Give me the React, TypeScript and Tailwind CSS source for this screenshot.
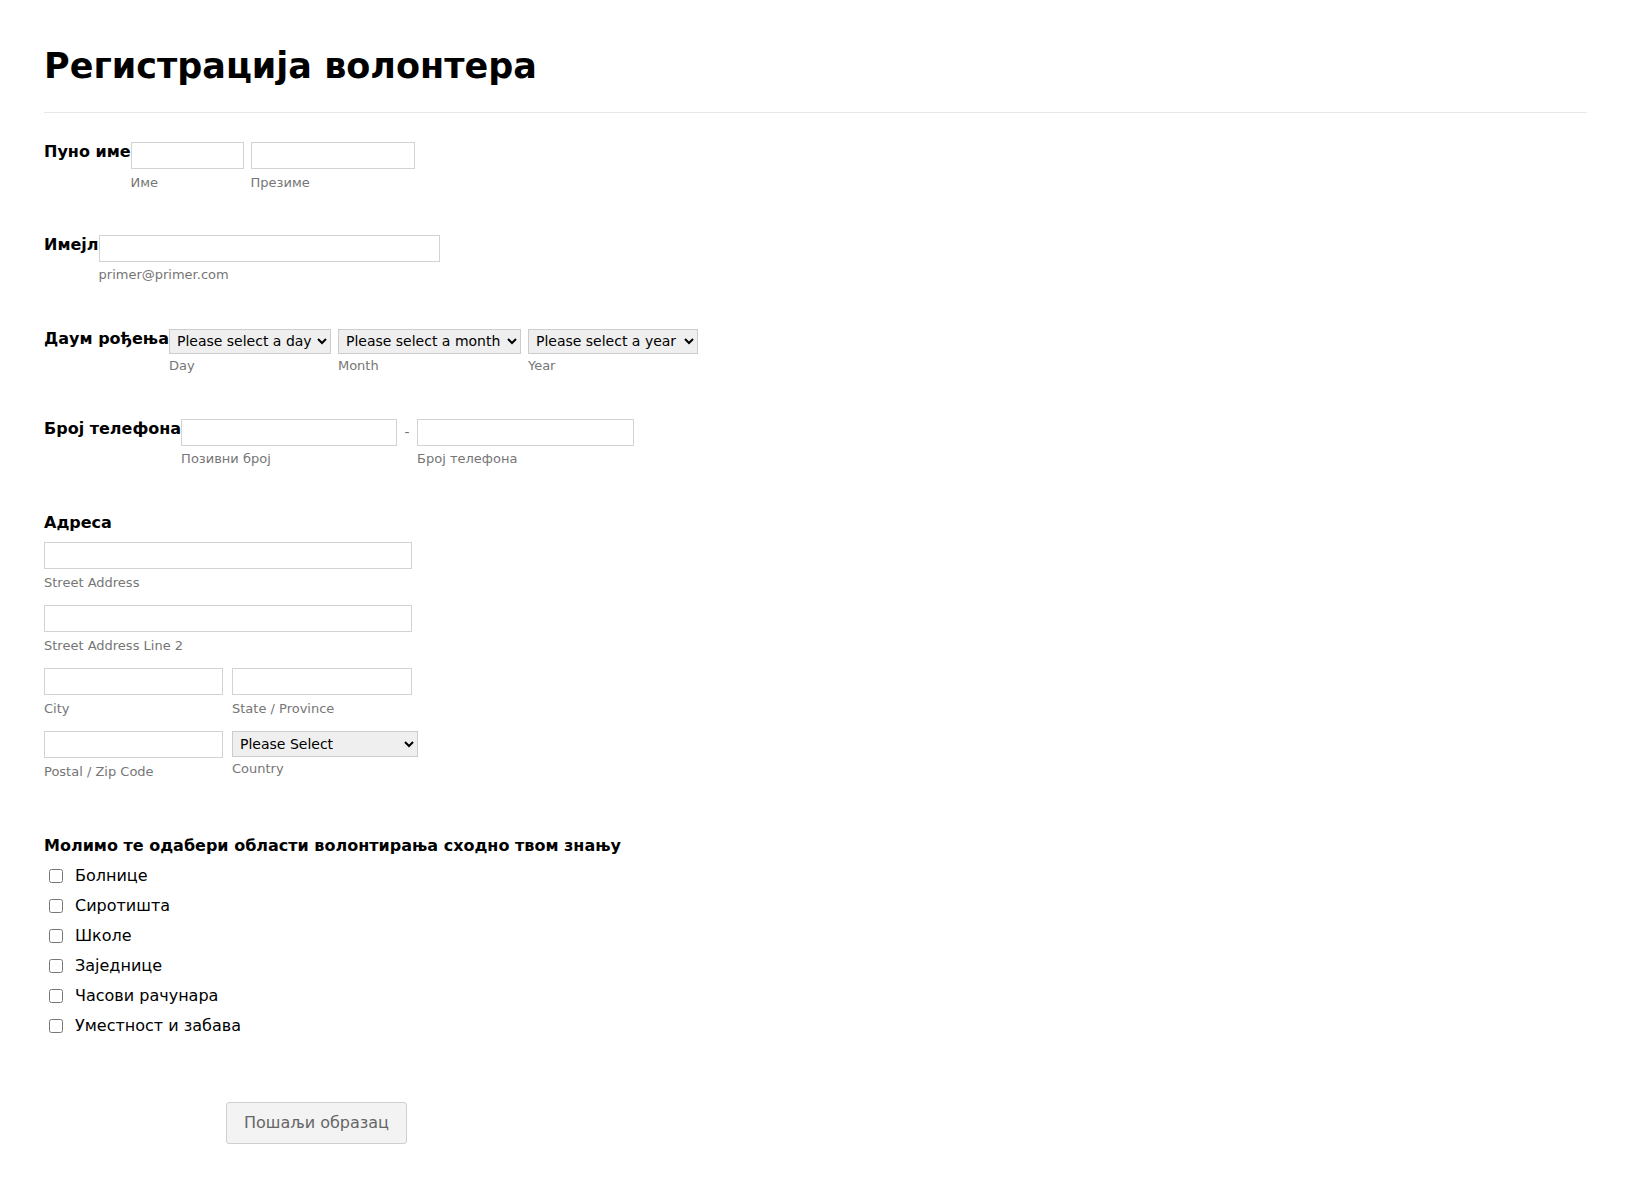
import React from "react";

const inputCls = "block h-[27px] border border-[#d3d3d3] bg-white";
const subCls = "block text-[13px] leading-[16px] text-[#767676]";
const selectCls = "block h-[25px] border border-[#cccccc] bg-[#efefef] pl-[3px] text-[14px] text-black";
const labelCls = "text-[16px] font-bold leading-[19px] text-black whitespace-nowrap";

function Field({ sub, sel, children }: { sub: string; sel?: boolean; children?: React.ReactNode }) {
  return (
    <div className="flex flex-col">
      {children}
      <span className={`${subCls} ${sel ? "mt-[4px]" : "mt-[5.5px]"}`}>{sub}</span>
    </div>
  );
}

export default function App() {
  const options = ["Болнице", "Сиротишта", "Школе", "Заједнице", "Часови рачунара", "Уместност и забава"];
  return (
    <div className="min-h-[1188px] bg-white pl-[44px] pr-[41px] pt-[45px] font-['DejaVu_Sans',sans-serif] text-black">
      <h1 className="text-[35px] font-bold leading-[42px]">Регистрација волонтера</h1>
      <div className="mt-[25px] border-t border-[#e8e8e8]" />

      {/* Full name */}
      <div className="mt-[29px] flex items-start">
        <span className={labelCls}>Пуно име</span>
        <div className="flex gap-[6.5px]">
          <Field sub="Име">
            <input className={`${inputCls} w-[113.5px]`} />
          </Field>
          <Field sub="Презиме">
            <input className={`${inputCls} w-[164px]`} />
          </Field>
        </div>
      </div>

      {/* Email */}
      <div className="mt-[44px] flex items-start">
        <span className={labelCls}>Имејл</span>
        <Field sub="primer@primer.com">
          <input className={`${inputCls} w-[341px]`} />
        </Field>
      </div>

      {/* Birth date */}
      <div className="mt-[45.5px] flex items-start">
        <span className={labelCls}>Даум рођења</span>
        <div className="flex gap-[7px]">
          <Field sub="Day" sel>
            <select className={`${selectCls} w-[162px]`}>
              <option>Please select a day</option>
            </select>
          </Field>
          <Field sub="Month" sel>
            <select className={`${selectCls} w-[183px]`}>
              <option>Please select a month</option>
            </select>
          </Field>
          <Field sub="Year" sel>
            <select className={`${selectCls} w-[170px]`}>
              <option>Please select a year</option>
            </select>
          </Field>
        </div>
      </div>

      {/* Phone */}
      <div className="mt-[45px] flex items-start">
        <span className={labelCls}>Број телефона</span>
        <div className="flex items-start">
          <Field sub="Позивни број">
            <input className={`${inputCls} w-[216px]`} />
          </Field>
          <span className="flex h-[27px] w-[20px] items-center justify-center text-[14px] text-[#777]">-</span>
          <Field sub="Број телефона">
            <input className={`${inputCls} w-[217px]`} />
          </Field>
        </div>
      </div>

      {/* Address */}
      <div className="mt-[46px]">
        <div className={labelCls}>Адреса</div>
        <div className="mt-[10px] flex flex-col gap-[14.5px]">
          <Field sub="Street Address">
            <input className={`${inputCls} w-[368px]`} />
          </Field>
          <Field sub="Street Address Line 2">
            <input className={`${inputCls} w-[368px]`} />
          </Field>
          <div className="flex gap-[9.5px]">
            <Field sub="City">
              <input className={`${inputCls} w-[178.5px]`} />
            </Field>
            <Field sub="State / Province">
              <input className={`${inputCls} w-[180px]`} />
            </Field>
          </div>
          <div className="flex gap-[9.5px]">
            <Field sub="Postal / Zip Code">
              <input className={`${inputCls} w-[178.5px]`} />
            </Field>
            <Field sub="Country" sel>
              <select className={`${selectCls} h-[26px] w-[186px]`}>
                <option>Please Select</option>
              </select>
            </Field>
          </div>
        </div>
      </div>

      {/* Volunteer areas */}
      <div className="mt-[56.5px]">
        <div className={labelCls}>Молимо те одабери области волонтирања сходно твом знању</div>
        <div className="mt-[5.5px] flex flex-col">
          {options.map((o) => (
            <label key={o} className="flex h-[30px] items-center">
              <input type="checkbox" className="m-0 ml-[5px] h-[14px] w-[14px]" />
              <span className="ml-[12px] text-[16px] leading-[19px]">{o}</span>
            </label>
          ))}
        </div>
      </div>

      {/* Submit */}
      <button className="ml-[182px] mt-[61px] h-[42px] w-[181px] rounded-[3px] border border-[#cfcfcf] bg-[#f3f3f3] text-[16px] text-[#666]">
        Пошаљи образац
      </button>
    </div>
  );
}
